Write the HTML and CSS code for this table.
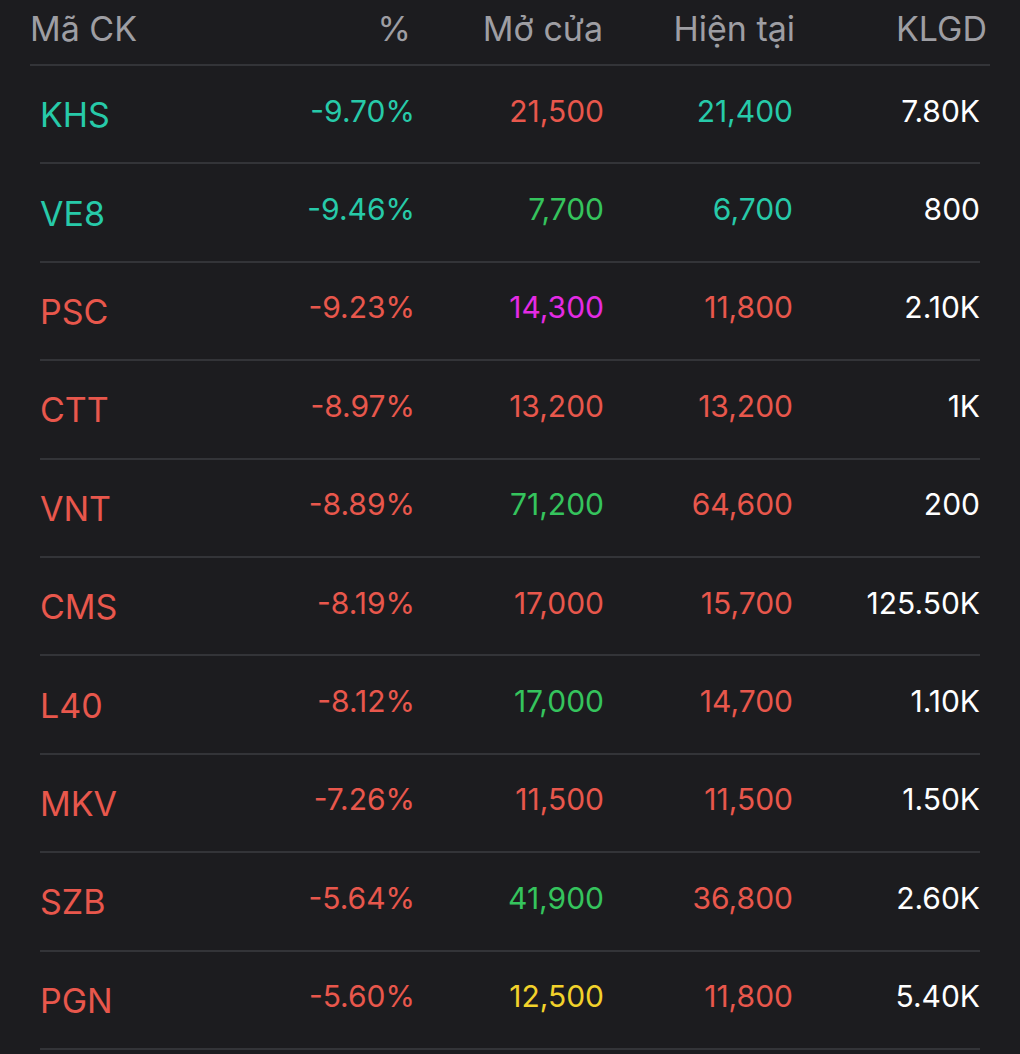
FILE: index.html
```html
<!DOCTYPE html>
<html lang="vi">
<head>
<meta charset="utf-8">
<title>Bảng giá</title>
<link rel="stylesheet" href="styles.css">
</head>
<body>
<div class="board">
  <div class="head">
    <div class="hc left">Mã CK</div>
    <div class="hc">%</div>
    <div class="hc">Mở cửa</div>
    <div class="hc">Hiện tại</div>
    <div class="hc last">KLGD</div>
  </div>
  <div class="rows">
    <div class="row"><div class="sym teal">KHS</div><div class="num teal">-9.70%</div><div class="num red">21,500</div><div class="num teal">21,400</div><div class="num white">7.80K</div></div>
    <div class="row"><div class="sym teal">VE8</div><div class="num teal">-9.46%</div><div class="num green">7,700</div><div class="num teal">6,700</div><div class="num white">800</div></div>
    <div class="row"><div class="sym red">PSC</div><div class="num red">-9.23%</div><div class="num magenta">14,300</div><div class="num red">11,800</div><div class="num white">2.10K</div></div>
    <div class="row"><div class="sym red">CTT</div><div class="num red">-8.97%</div><div class="num red">13,200</div><div class="num red">13,200</div><div class="num white">1K</div></div>
    <div class="row"><div class="sym red">VNT</div><div class="num red">-8.89%</div><div class="num green">71,200</div><div class="num red">64,600</div><div class="num white">200</div></div>
    <div class="row"><div class="sym red">CMS</div><div class="num red">-8.19%</div><div class="num red">17,000</div><div class="num red">15,700</div><div class="num white">125.50K</div></div>
    <div class="row"><div class="sym red">L40</div><div class="num red">-8.12%</div><div class="num green">17,000</div><div class="num red">14,700</div><div class="num white">1.10K</div></div>
    <div class="row"><div class="sym red">MKV</div><div class="num red">-7.26%</div><div class="num red">11,500</div><div class="num red">11,500</div><div class="num white">1.50K</div></div>
    <div class="row"><div class="sym red">SZB</div><div class="num red">-5.64%</div><div class="num green">41,900</div><div class="num red">36,800</div><div class="num white">2.60K</div></div>
    <div class="row"><div class="sym red">PGN</div><div class="num red">-5.60%</div><div class="num yellow">12,500</div><div class="num red">11,800</div><div class="num white">5.40K</div></div>
  </div>
</div>
</body>
</html>
```

FILE: styles.css
```css
html, body {
  margin: 0;
  padding: 0;
  background: #1c1c1f;
}
body {
  font-family: Inter, "Noto Sans", "Liberation Sans", sans-serif;
  width: 1020px;
  height: 1054px;
  overflow: hidden;
}
.board {
  display: flex;
  flex-direction: column;
}
.head {
  margin: 0 30px;
  height: 64px;
  border-bottom: 2px solid #333438;
  display: grid;
  grid-template-columns: 191px 190px 192px 192px 195px;
  align-items: start;
  box-sizing: content-box;
}
.hc {
  color: #9e9ea3;
  font-size: 34px;
  line-height: 40px;
  padding-top: 9px;
  text-align: right;
}
.hc.left { text-align: left; padding-left: 0; }
.hc.last { padding-right: 3px; }
.rows {
  margin: 0 40px;
  display: flex;
  flex-direction: column;
}
.row {
  height: 96.4px;
  border-bottom: 2px solid #333438;
  display: grid;
  grid-template-columns: 187px 188px 189px 189px 187px;
  align-items: center;
}
.sym {
  font-size: 34px;
  line-height: 40px;
  padding-top: 2px;
  padding-left: 0;
}
.num {
  font-size: 30px;
  line-height: 40px;
  text-align: right;
  padding-bottom: 7px;
}
.teal { color: #27caa9; }
.red { color: #e8574c; }
.green { color: #35c45d; }
.magenta { color: #e42be4; }
.yellow { color: #f2d22b; }
.white { color: #ffffff; }
```
